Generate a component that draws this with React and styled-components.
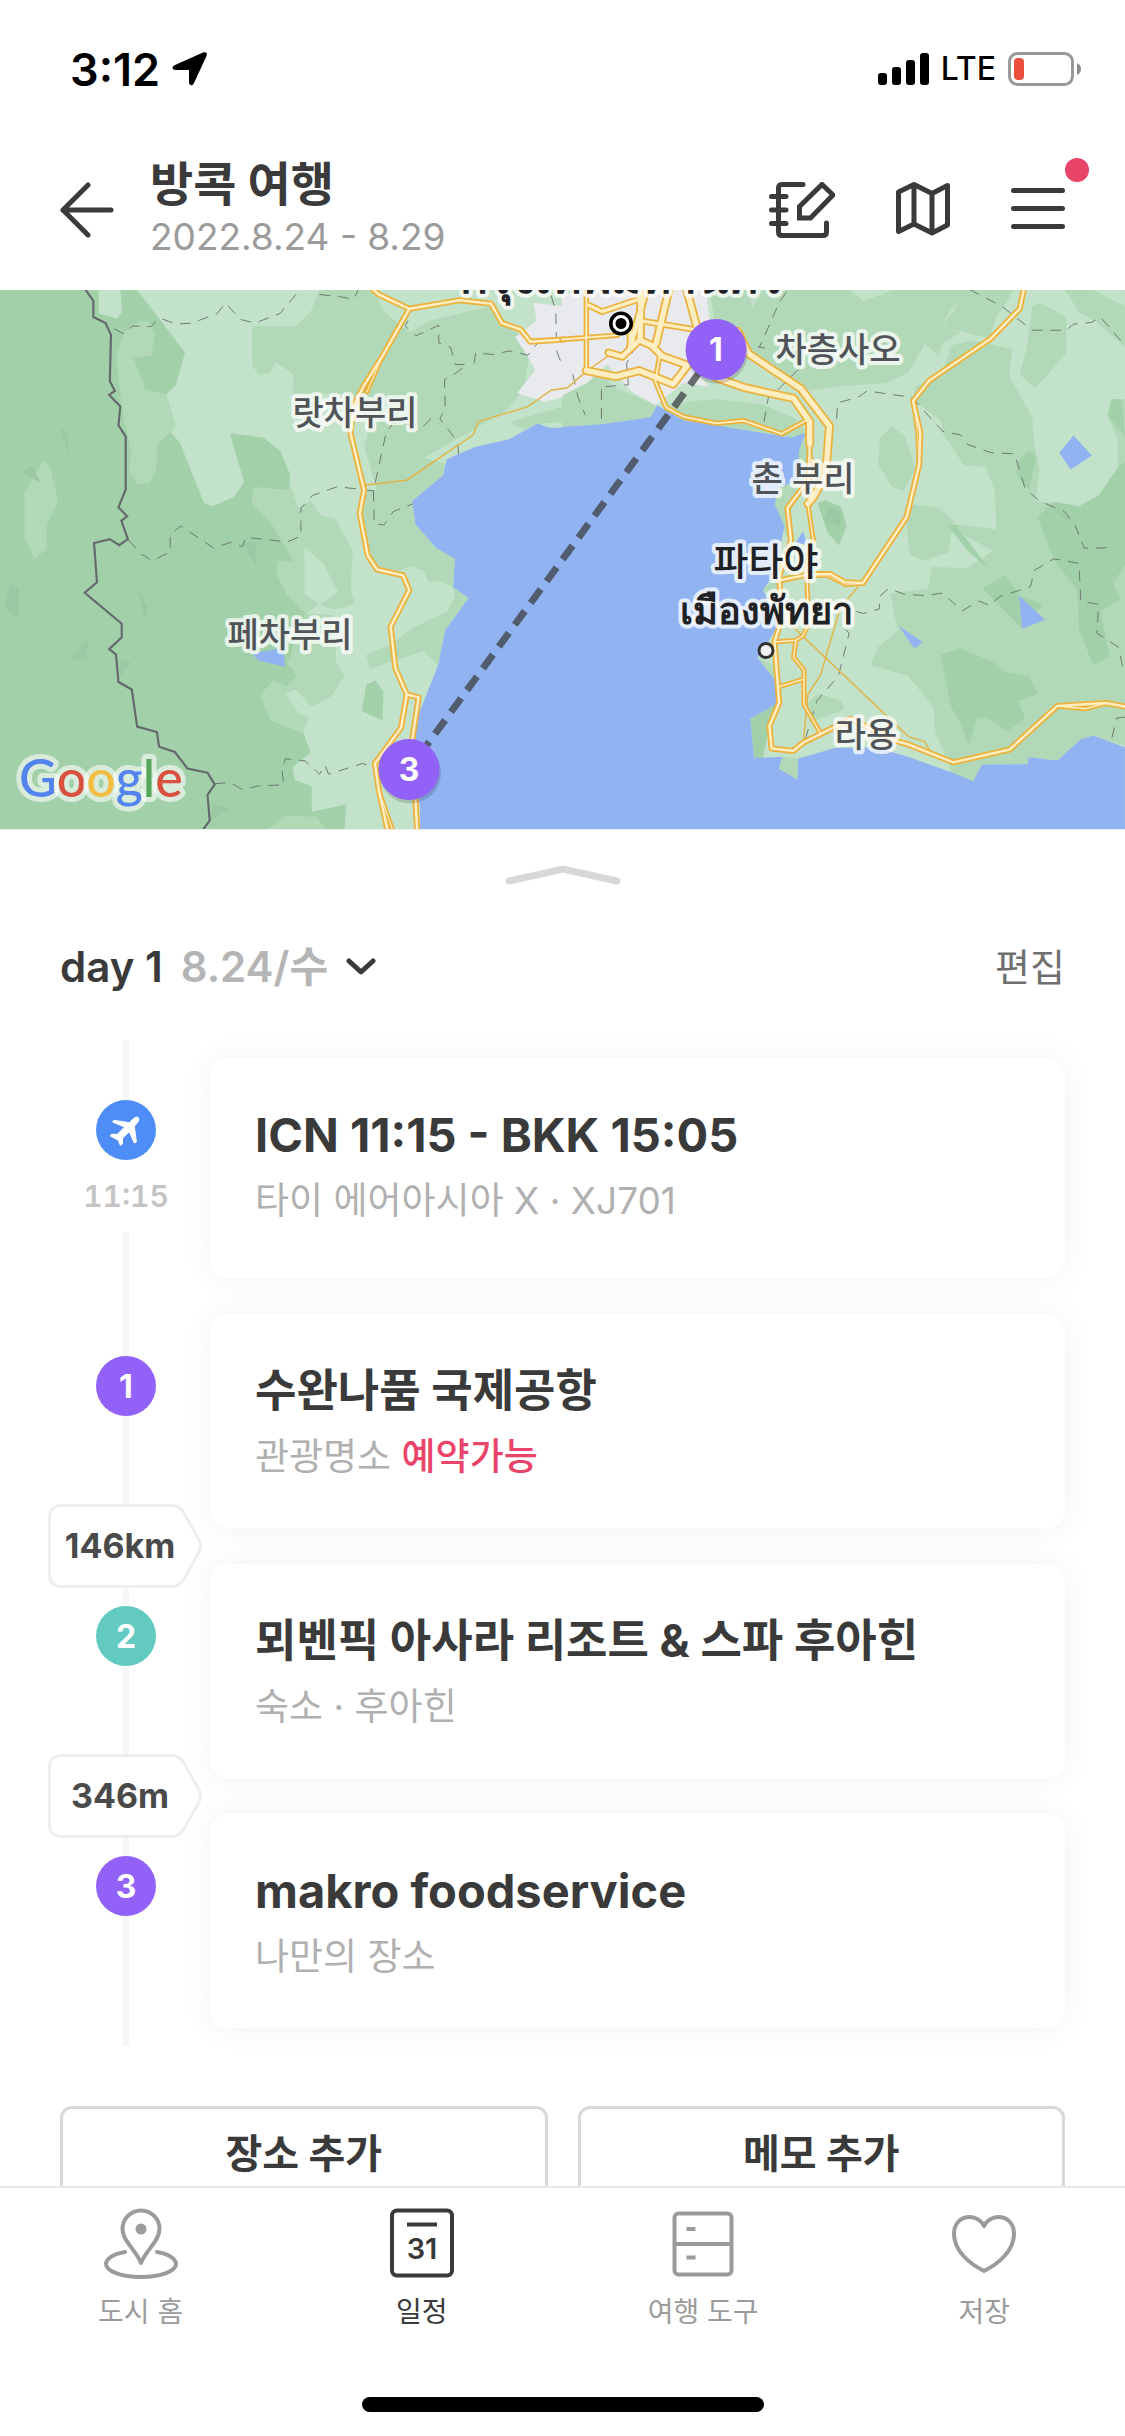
import { useState } from "react";
import styled, { createGlobalStyle } from "styled-components";

const GlobalStyle = createGlobalStyle`
  * {
    box-sizing: border-box;
  }

  body {
    margin: 0;
    background: #fff;
    color: #3a3a3a;
    font-family: Inter, "Noto Sans CJK KR", sans-serif;
  }

  button {
    font-family: inherit;
    color: inherit;
    background: none;
    border: none;
    padding: 0;
    cursor: pointer;
  }

  svg {
    display: block;
    flex-shrink: 0;
  }
`;

const Screen = styled.div`
  height: 100vh;
  display: flex;
  flex-direction: column;
  overflow: hidden;
`;

const StatusBar = styled.div`
  display: flex;
  justify-content: space-between;
  align-items: center;
  height: 136px;
  padding: 2px 44px 0 70px;
  color: #000;
  flex-shrink: 0;
`;

const StatusGroup = styled.div`
  display: flex;
  align-items: center;
  gap: 12px;
`;

const Clock = styled.span`
  font-size: 45px;
  font-weight: 600;
`;

const Network = styled.span`
  font-size: 32px;
  font-weight: 500;
  line-height: 40px;
`;

const Header = styled.header`
  display: flex;
  align-items: center;
  height: 154px;
  padding: 0 60px 6px;
  flex-shrink: 0;
`;

const TripInfo = styled.div`
  flex: 1;
  margin-left: 36px;
`;

const TripTitle = styled.h1`
  margin: 0;
  font-size: 47px;
  font-weight: 700;
  line-height: 54px;
`;

const TripDates = styled.p`
  margin: 0;
  color: #9b9b9b;
  font-size: 37px;
  line-height: 52px;
`;

const HeaderActions = styled.div`
  display: flex;
  gap: 61px;
`;

const IconButton = styled.button`
  position: relative;
  display: block;
`;

const Dot = styled.span`
  position: absolute;
  top: -24px;
  right: -24px;
  width: 24px;
  height: 24px;
  border-radius: 50%;
  background: #e9446a;
`;

const MapArea = styled.section`
  height: 540px;
  border-bottom: 1px solid #eee;
  flex-shrink: 0;

  svg {
    width: 100%;
    height: 100%;
  }
`;

const Schedule = styled.main`
  flex: 1;
  min-height: 0;
  overflow: hidden;
`;

const Handle = styled.button`
  display: flex;
  justify-content: center;
  width: 100%;
  padding: 35px 0 20px;
`;

const DayRow = styled.div`
  display: flex;
  justify-content: space-between;
  align-items: center;
  height: 60px;
  margin: 32px 60px 43px;
`;

const DaySelect = styled.button`
  display: flex;
  align-items: center;
  gap: 18px;
  font-size: 42px;
  font-weight: 600;
  line-height: 60px;
`;

const DayDate = styled.span`
  color: #b5b5b5;
`;

const EditButton = styled.button`
  color: #6f6f6f;
  font-size: 38px;
  line-height: 60px;
`;

const Timeline = styled.ol`
  margin: 0;
  padding: 0 60px 0 48px;
  list-style: none;
`;

const Stop = styled.li`
  position: relative;
  display: flex;
  gap: 6px;
`;

const Rail = styled.div`
  width: 156px;
  display: flex;
  flex-direction: column;
  align-items: center;
`;

const Line = styled.span`
  width: 6px;
  background: #f7f7f7;
  ${(props) => (props.$top ? "height: 60px;" : "flex: 1;")}
`;

const Badge = styled.span`
  display: flex;
  align-items: center;
  justify-content: center;
  width: 60px;
  height: 60px;
  border-radius: 50%;
  background: ${(props) => props.$color};
  color: #fff;
  font-size: 32px;
  font-weight: 700;
`;

const Time = styled.time`
  height: 72px;
  color: #c4c4c4;
  font-size: 30px;
  font-weight: 600;
  font-variant-numeric: tabular-nums;
  line-height: 72px;
`;

const Card = styled.article`
  flex: 1;
  margin: 18px 0;
  padding: 48px 45px 46px;
  border-radius: 18px;
  background: #fff;
  box-shadow: 0 0 32px rgba(0, 0, 0, 0.06);
  ${(props) => props.$tall && "padding-bottom: 52px;"}
`;

const CardTitle = styled.h2`
  margin: 0;
  font-size: ${(props) => (props.$latin ? 47 : 45)}px;
  font-weight: 700;
  line-height: 58px;
`;

const CardText = styled.p`
  margin: 0;
  padding-top: 12px;
  color: #b0b0b0;
  font-size: 37px;
  line-height: 50px;
`;

const Bookable = styled.strong`
  color: #e9446a;
  font-weight: 500;
`;

/* sits on the border between two stops */
const Distance = styled.div`
  position: absolute;
  left: 0;
  bottom: -42px;
  z-index: 1;
  width: 156px;
  height: 84px;
  padding-right: 12px;
  color: #4a4a4a;
  font-size: 34px;
  font-weight: 700;
  line-height: 84px;
  text-align: center;

  svg {
    position: absolute;
    inset: 0;
    z-index: -1;
  }
`;

const AddRow = styled.div`
  display: flex;
  gap: 30px;
  padding: 60px 60px 0;
`;

const AddButton = styled.button`
  flex: 1;
  height: 90px;
  border: 3px solid #d8d8d8;
  border-radius: 12px;
  font-size: 40px;
  font-weight: 700;
`;

const TabBar = styled.nav`
  background: #fff;
  border-top: 2px solid #e8e8e8;
  flex-shrink: 0;
`;

const Tabs = styled.div`
  display: grid;
  grid-template-columns: repeat(4, 1fr);
  height: 209px;
  padding-top: 12px;
`;

const Tab = styled.button`
  display: flex;
  flex-direction: column;
  align-items: center;
  gap: 8px;
  color: ${(props) => (props.$active ? "#3a3a3a" : "#9b9b9b")};
  font-size: 28px;
  line-height: 40px;
`;

const HomeIndicator = styled.div`
  width: 402px;
  height: 15px;
  margin: 0 auto 24px;
  border-radius: 8px;
  background: #000;
`;

const stroke = {
  fill: "none",
  stroke: "currentColor",
  strokeLinecap: "round",
  strokeLinejoin: "round",
};

const LocationIcon = () => (
  <svg width="36" height="36" viewBox="0 0 36 36">
    <path
      d="M3 14 L31 1.500 Q36 0 34.500 5 L22 32 Q20.500 35 18.500 34 Q17 33.500 17 31 V19 H4 Q0.500 19 0.500 16.500 Q0.500 15 3 14Z"
      fill="#000"
    />
  </svg>
);

const SignalIcon = () => (
  <svg width="51" height="32" viewBox="0 0 51 32">
    <rect x="0" y="20" width="9" height="12" rx="3" />
    <rect x="14" y="14" width="9" height="18" rx="3" />
    <rect x="28" y="7" width="9" height="25" rx="3" />
    <rect x="42" y="0" width="9" height="32" rx="3" />
  </svg>
);

const BatteryIcon = () => (
  <svg width="73" height="35" viewBox="0 0 73 35">
    <rect x="1.500" y="1.500" width="63" height="31" rx="8" fill="none" stroke="#999" strokeWidth="3" />
    <rect x="6" y="6" width="10" height="22" rx="4" fill="#ea4e3d" />
    <path d="M69 11 Q73 13 73 17 T69 23Z" fill="#8c8c8c" />
  </svg>
);

const BackIcon = () => (
  <svg width="54" height="56" viewBox="0 0 54 56" {...stroke} strokeWidth="5">
    <path d="M28 3 L3 28 L28 53 M3 28 H51" />
  </svg>
);

const NoteIcon = () => (
  <svg width="67" height="56" viewBox="0 0 67 56" {...stroke} strokeWidth="5">
    <path d="M35 2.500 H14 Q10.500 2.500 10.500 6 V50 Q10.500 53.500 14 53.500 H55 Q58.500 53.500 58.500 50 V41" />
    <path d="M3.500 14.500 H18 M3.500 28 H18 M3.500 41.500 H18" />
    <path d="M31.500 36 V24.500 L54 2.500 L65 13 L42.500 36Z" strokeLinejoin="miter" />
  </svg>
);

const MapIcon = () => (
  <svg width="54" height="56" viewBox="0 0 54 56" {...stroke} strokeWidth="5">
    <path d="M2.500 10 L18 2.500 L36 11.500 L51.500 3.500 V43 L36 51 L18 42 L2.500 49.500Z M18 2.500 V42 M36 11.500 V51" />
  </svg>
);

const MenuIcon = () => (
  <svg width="54" height="56" viewBox="0 0 54 56" {...stroke} strokeWidth="5">
    <path d="M2.500 8.500 H51.500 M2.500 26.500 H51.500 M2.500 44.500 H51.500" />
  </svg>
);

const HandleIcon = () => (
  <svg width="116" height="20" viewBox="0 0 116 20" fill="none" stroke="#d8d8d8" strokeWidth="7" strokeLinecap="round">
    <path d="M4 16 L58 4 L112 16" />
  </svg>
);

const ChevronIcon = () => (
  <svg width="30" height="18" viewBox="0 0 30 18" {...stroke} strokeWidth="5">
    <path d="M3 3 L15 14 L27 3" />
  </svg>
);

const PlaneIcon = () => (
  <svg width="60" height="60" viewBox="48 30 180 180">
    <path
      d="M160 86 Q168 79 174 82 Q179 86 175 94 L163 109 L169 156 L163 159 L148 125 L128 144 L127 162 L121 166 L115 151 L91 138 L94 133 L112 133 L134 111 L98 96 L101 91 L148 98Z"
      fill="#fff"
      stroke="#fff"
      strokeWidth="3"
      strokeLinejoin="round"
    />
  </svg>
);

const TagShape = () => (
  <svg width="156" height="84" viewBox="0 0 156 84">
    <path
      d="M14 1.500 H124 Q131 1.500 136 9 L151 36 Q154 42 151 48 L136 75 Q131 82.500 124 82.500 H14 Q1.500 82.500 1.500 70 V14 Q1.500 1.500 14 1.500Z"
      fill="#fff"
      stroke="#eee"
      strokeWidth="3"
    />
  </svg>
);

const TabIcon = ({ name }) => (
  <svg width="84" height="84" viewBox="0 0 84 84" {...stroke} strokeWidth="4">
    {name === "city" && (
      <>
        <path d="M42 63 C37 50 23.500 41 23.500 29 A18.500 18.500 0 0 1 60.500 29 C60.500 41 47 50 42 63Z" />
        <circle cx="42" cy="29" r="5.500" fill="currentColor" stroke="none" />
        <path d="M26 52 C14 54 7 59 7 64 C7 71 22 77 42 77 S77 71 77 64 C77 59 70 54 58 52" />
      </>
    )}
    {name === "plan" && (
      <>
        <rect x="12" y="10.500" width="60" height="65" rx="5" />
        <path d="M27 24.500 H57" strokeLinecap="butt" />
        <text x="42" y="59" fontSize="29" fontWeight="600" textAnchor="middle" fill="currentColor" stroke="none">
          31
        </text>
      </>
    )}
    {name === "tools" && (
      <>
        <rect x="13.500" y="13.500" width="57" height="61" rx="4" />
        <path d="M13.500 44 H70.500 M25.500 29 H34.500 M25.500 57.500 H34.500" strokeLinecap="butt" />
      </>
    )}
    {name === "saved" && (
      <path d="M42 26 C39 20 33 17 28 17 C18 17 12 24 12 34 C12 51 28 64 42 71 C56 64 72 51 72 34 C72 24 66 17 56 17 C51 17 45 20 42 26Z" />
    )}
  </svg>
);

// Map tiles: west and east halves, each in its own tile units
const west = {
  dark: [
    "0,28 380,28 440,105 515,205 490,295 462,322 490,412 475,428 500,455 568,625 592,635 652,608 680,568 640,430 735,443 780,480 808,545 805,590 708,582 702,628 755,680 820,790 770,790 775,830 800,885 850,935 820,1040 800,1075 830,1108 800,1140 760,1125 725,1165 755,1235 845,1270 865,1325 815,1365 820,1400 868,1420 868,1490 963,1470 960,1540 0,1540",
    "1075,400 1150,410 1212,430 1195,455 1150,450 1115,545 1080,545 1066,495",
    "1020,1135 1045,1122 1068,1155 1065,1235 1008,1208",
  ],
  mid: [
    "702,130 825,130 865,90 890,28 1040,28 1070,90 1140,148 1200,115 1300,90 1370,75 1440,150 1475,200 1460,310 1405,370 1180,500 1240,515 1234,548 1148,620 1157,685 1215,752 1267,782 1262,862 1220,842 1195,850 1180,815 1145,803 1110,815 1050,805 1025,770 1000,650 1015,590 1050,590 1015,470 1030,400 970,320 815,318 817,265 768,230 750,262 722,268 702,240",
    "380,120 410,115 432,150 422,212 372,220 405,308 462,322 490,412 440,460 435,530 415,570 385,573 360,540 365,480 345,390 330,280 325,210 345,150",
    "120,507 140,525 162,625 130,685 130,755 95,783 68,720 68,598",
    "708,582 805,590 810,575 830,640 865,620 893,660 935,670 982,760 977,865 988,908 930,925 890,910 850,935 800,885 775,830 770,790 820,790 755,680 702,628",
    "850,935 930,940 905,965 935,1000 935,1070 960,1108 920,1170 870,1195 845,1270 755,1235 725,1165 760,1125 800,1140 830,1108 800,1075",
    "1262,862 1305,892 1240,982 1220,1080 1180,1040 1030,1090 1020,1050 1085,1025 1150,975 1245,930 1267,888",
    "745,1540 800,1500 880,1505 910,1540",
    "1460,420 1497,403 1568,400 1568,355 1420,400",
  ],
  light: [
    "275,28 335,28 340,90 325,110 275,95",
    "848,750 900,795 942,875 890,910 848,880",
    "795,1158 825,1148 865,1195 900,1195 870,1235 830,1212",
  ],
  shade: [
    "165,418 190,425 190,488",
    "60,540 90,522 115,570",
    "385,865 412,920 402,955",
    "28,853 53,860 53,950 12,920",
    "248,1000 240,1065 198,1063",
    "675,735 712,738 715,805",
    "332,1065 365,1072 335,1115",
    "595,1470 642,1482 580,1520",
  ],
  urban: ["1485,65 1568,75 1568,330 1515,342 1440,318 1490,255 1470,215 1435,162 1495,115"],
  sea: [
    "1570,415 1530,415 1497,403 1418,447 1325,468 1244,503 1234,548 1148,620 1157,685 1215,752 1267,782 1262,862 1305,892 1240,982 1220,1080 1165,1220 1150,1290 1170,1480 1170,1540 1570,1540",
    "702,1047 790,1032 794,1084 720,1067",
  ],
};

const east = {
  mid: [
    "410,28 800,28 840,60 925,28 1130,28 1080,90 1055,130 1110,148 1060,180 1050,215 1010,180 965,260 905,290 760,300 690,310 530,210 440,170 425,110",
    "0,330 100,240 140,300 265,352 247,386 110,405 0,413",
    "295,360 360,340 430,335 560,350 650,390 690,440 640,443 500,420 430,408 340,395",
    "1085,185 1145,170 1255,195 1245,270 1310,385 1315,460 1265,495 1180,525 1120,520 1060,430 1055,395 975,335 985,300 1060,260",
    "1120,28 1260,28 1210,105 1190,165 1130,150 1055,130 1090,90",
    "1310,75 1330,65 1405,105 1405,205 1318,305 1275,265 1295,190",
    "920,410 955,440 985,530 950,592 920,580 882,520 885,445",
    "980,630 1050,640 1090,675 1075,765 1005,787 968,770 958,665",
    "1180,525 1265,495 1315,460 1330,530 1320,620 1440,635 1495,605 1548,528 1548,450 1520,380 1530,335 1568,335 1568,1305 1480,1277 1445,1287 1380,1347 1300,1338 1298,1357 1170,1358 1145,1405 1085,1380 1040,1265 1035,1200 965,1110 860,1080 880,1030 935,985 915,880 1020,865 1030,805 1130,808 1200,760 1075,690 1110,685 1210,700 1205,590",
    "1400,28 1568,28 1568,190 1490,120 1440,90",
    "680,1190 715,1160 780,1180 785,1205 690,1240",
    "600,585 660,560 640,640 625,720 593,630",
    "560,870 600,830 610,870 600,890",
    "545,1060 590,1080 600,1130",
    "604,1370 614,1336 658,1342 656,1400",
    "660,480 678,430 690,440 690,510 660,510",
  ],
  light: ["1480,28 1568,28 1568,75", "520,28 560,28 530,80"],
  dark: [
    "712,625 735,618 778,638 793,690 772,745 740,710",
    "1055,1050 1110,1033 1200,1070 1235,1100 1300,1110 1327,1160 1270,1180 1290,1230 1240,1265 1180,1225 1155,1230 1132,1308 1110,1240 1085,1200 1070,1130",
    "1300,480 1322,495 1300,590 1265,545 1270,510",
    "1440,635 1495,605 1548,528 1568,510 1568,800 1535,850 1555,895 1500,930 1525,1055 1480,1080 1440,980 1435,870 1370,785 1325,665 1370,622",
    "1235,827 1280,890 1340,910 1280,975 1225,920 1172,865",
    "525,1230 603,1185 580,1240 560,1340 535,1340",
    "1075,690 1095,685 1190,810 1135,765",
    "1530,335 1560,335 1568,440 1520,380",
  ],
  shade: ["745,635 775,650 775,692 728,672", "1370,640 1415,670 1410,680"],
  urban: ["0,45 60,28 400,28 410,100 425,170 370,250 410,300 340,290 260,352 195,315 125,238 70,290 0,325"],
  sea: [
    "-2,413 110,405 247,386 265,352 340,395 430,408 500,420 640,443 678,430 660,480 660,560 600,585 593,630 620,690 610,740 600,810 560,870 610,960 590,990 545,1060 600,1130 603,1185 525,1230 535,1340 614,1336 604,1370 656,1400 658,1342 760,1312 870,1310 960,1335 1085,1380 1145,1405 1170,1358 1298,1357 1300,1338 1380,1347 1445,1287 1480,1277 1568,1310 1568,1540 -2,1540",
    "1425,437 1476,493 1417,532 1385,485",
    "1273,885 1345,953 1282,978",
    "938,970 1005,1015 982,1034",
    "672,705 682,742 650,738",
  ],
};

const westRoads = [
  { w: 12, d: "M1030 20 L1055 42 L1140 82 L1280 58 L1368 68 L1398 122 L1450 140 L1477 174 L1570 168" },
  { w: 12, d: "M1140 82 L1065 215 L1012 300 L985 355 L976 430 L1014 590 L1002 655 L1024 772 L1050 812 L1122 828 L1140 870 L1088 972 L1101 1088 L1133 1162 L1117 1255 L1044 1355 L1055 1430 L1080 1545" },
  { w: 12, d: "M1133 1162 L1166 1170 L1148 1290 L1162 1545" },
  { w: 8, d: "M1055 1430 L1095 1545 M1065 215 L1022 315" },
];

const eastRoads = [
  { w: 10, d: "M68 20 V255 M0 168 L155 156" },
  { w: 14, d: "M75 72 L112 90 L215 55 M190 130 L190 190 M215 115 L370 140" },
  { w: 20, d: "M220 20 L218 170 L250 185 L280 215 L350 240 L310 293 L215 255 L150 272 L68 255 M300 20 L262 180 M345 20 L375 130" },
  { w: 18, d: "M235 28 L190 190 M130 205 L168 216 L218 168" },
  { w: 10, d: "M272 215 L260 285 L290 358 L340 385 L430 403 L505 395 L612 432 L680 395" },
  { w: 20, d: "M430 275 L510 303 L645 333 L690 398 V460 M490 145 L520 208 L665 305 L745 410 L735 545 L700 610 L685 628" },
  { w: 12, d: "M690 460 L688 560 L628 640 L638 730 L605 830 L612 950 L592 1015 L605 1185 L578 1250 L584 1313 L644 1320 L672 1297 L805 1230 L930 1292 L965 1302 L1090 1352 L1247 1316 L1380 1194 L1515 1186 L1570 1196" },
  { w: 9, d: "M690 500 L735 545 M685 628 L700 730 L680 800 L688 960 L672 997 L652 1010 L645 1058 L674 1093 V1190 L720 1270 M592 1015 L652 1010 M605 1140 L670 1120 M1380 1194 L1458 1202 L1515 1186" },
  { w: 12, d: "M1288 20 L1275 82 L1195 165 L1023 283 L978 340 L998 430 L995 518 L960 665 L838 850 L788 848 L748 825 L690 825 L608 842" },
  { w: 7, d: "M978 340 L990 430 L995 518 M690 830 L740 830 L790 855 L838 852" },
];

const borders = [
  "M318 138 L345 152 L370 130 L420 132 L445 108 L490 125 L535 122 L605 95 L628 66 L670 112 L710 122 L780 95 L830 35 M890 42 L945 48 L985 55 L998 28",
  "M358 730 L395 770 L425 788 L474 762 V715 L503 690 L595 752 L642 736 L675 748 L685 722 L800 735 L838 718 V640 L870 605 L940 580 L1040 592 L1060 500 L1075 430 L1095 402 L1180 410 L1205 385",
  "M1040 592 L1042 685 L1070 687 L1095 650 L1150 628 M1277 490 L1275 455 L1225 390 L1240 360 L1238 280 L1270 262 L1300 238 H1268 L1255 190 L1222 178 V128 L1158 158 L1128 130 L1145 100",
  "M1320 235 L1325 205 L1370 210 L1420 200 L1470 212 L1500 175 L1568 168 M1535 45 L1548 90 L1550 200 L1568 245",
  "M598 1412 L640 1408 L675 1428 L720 1418 L790 1415 L785 1370 L795 1342 L850 1348 L890 1385 L905 1360 L915 1385 L1010 1355 L1040 1365",
];

const eastBorders = [
  "M625 35 L605 65 L550 190 M545 188 L565 192 M650 200 L660 250 L605 305 L575 330 L560 412",
  "M250 190 L215 170 L180 235 L185 295 L120 300 M30 265 L45 330 L65 380 M110 308 V400",
  "M765 390 L768 345 L825 330 L850 312 L975 330 L1060 425 L1110 435 L1130 462 L1195 485 L1260 488 L1290 585 L1330 620 L1400 650 L1430 690 L1455 752 H1510 L1540 740",
  "M1135 28 L1225 75 L1310 142 H1405 L1425 125 L1475 120 L1500 105 L1568 185",
  "M820 930 L840 935 L885 922 L882 890 L910 865 L955 882 L1015 885 L1060 878 L1115 928 L1160 900 L1190 912 L1220 888 L1305 860 L1315 815 L1370 782 L1440 795 L1445 900 L1495 910 L1490 990 L1550 1030 L1565 1100",
  "M790 980 L800 990 L770 1110 L710 1180 L680 1280 L680 1310 M1570 1225 L1545 1228 L1530 1290",
];

const landColors = {
  mid: "#b2d9b7",
  dark: "#a1d0a9",
  light: "#c3e2ca",
  shade: "#9cc9a4",
  urban: "#e8eaed",
  sea: "#91b3f2",
};

const Land = ({ data, order }) =>
  order.map((kind) =>
    data[kind].map((points) => <polygon key={points} points={points} fill={landColors[kind]} />)
  );

const Roads = ({ roads }) => (
  <g fill="none" strokeLinejoin="round" strokeLinecap="round">
    {roads.map((road) => (
      <path key={road.d} d={road.d} stroke="#ecb23e" strokeWidth={road.w + 5} />
    ))}
    {roads.map((road) => (
      <path key={road.d} d={road.d} stroke="#fdeec2" strokeWidth={road.w - 5} />
    ))}
  </g>
);

const MapLabel = styled.text`
  fill: ${(props) => (props.$strong ? "#202124" : "#505458")};
  font-size: ${(props) => props.$size || 34}px;
  font-weight: ${(props) => (props.$bold ? 700 : 500)};
  text-anchor: middle;
  paint-order: stroke;
  stroke: rgba(255, 255, 255, 0.75);
  stroke-width: 8px;
  stroke-linejoin: round;
`;

const PinNumber = styled.text`
  fill: #fff;
  font-size: 32px;
  font-weight: 700;
  text-anchor: middle;
`;

const Logo = styled.text`
  font-family: Lato, sans-serif;
  font-size: 52px;
  font-weight: 500;
  paint-order: stroke;
  stroke: rgba(255, 255, 255, 0.6);
  stroke-width: 10px;
  stroke-linejoin: round;
`;

const labels = [
  { text: "랏차부리", x: 355, y: 135 },
  { text: "페차부리", x: 290, y: 357 },
  { text: "차층사오", x: 838, y: 72 },
  { text: "촌 부리", x: 803, y: 201 },
  { text: "라용", x: 866, y: 457 },
  { text: "파타야", x: 766, y: 285, size: 38, strong: true },
  { text: "เมืองพัทยา", x: 766, y: 334, size: 38, strong: true, bold: true },
  { text: "กรุงเทพมหานคร", x: 622, y: 3, size: 46, strong: true, bold: true },
];

const pins = [
  { n: 1, x: 716, y: 60 },
  { n: 3, x: 409, y: 480 },
];

const logoLetters = [
  ["G", "#5383ec"],
  ["o", "#d85040"],
  ["o", "#f1bd42"],
  ["g", "#5383ec"],
  ["l", "#58a55c"],
  ["e", "#d85040"],
];

const TripMap = () => (
  <svg viewBox="0 0 1125 540" preserveAspectRatio="xMidYMid slice" role="img" aria-label="방콕 여행 지도">
    <rect width="1125" height="540" fill="#c3e2ca" />
    <g transform="scale(0.35906 0.35714) translate(0 -28)">
      <Land data={west} order={["dark", "mid", "light", "shade", "urban", "sea"]} />
      <g transform="translate(1565 0)">
        <Land data={east} order={["mid", "light", "dark", "shade", "urban", "sea"]} />
      </g>
      <path
        d="M232 20 L260 60 V105 L294 122 L309 155 L306 285 L320 312 L304 323 L335 355 L330 408 L350 440 V588 L330 638 L354 663 L338 675 L356 727 L332 744 L306 727 L262 738 L270 848 L236 877 L339 964 V1002 L304 1035 L323 1050 L330 1127 L367 1148 L382 1252 L437 1267 L443 1308 L487 1323 L522 1369 L578 1381 L598 1414 L578 1443 L584 1515 L562 1545"
        fill="none"
        stroke="#64696c"
        strokeWidth="6"
      />
      <g fill="none" stroke="#64706a" strokeWidth="2.500" strokeDasharray="30 22">
        {borders.map((d) => (
          <path key={d} d={d} />
        ))}
        <g transform="translate(1565 0)">
          {eastBorders.map((d) => (
            <path key={d} d={d} />
          ))}
        </g>
      </g>
      <g fill="none" stroke="#e0b548" strokeWidth="4">
        <path d="M1014 576 L1133 562 L1318 435 L1332 398 L1470 356 L1535 310 L1580 303 L1632 258 L1700 210" />
        <path d="M2195 960 L2530 1280 L2575 1294 L2590 1320 M2390 860 L2340 920 L2285 1108 L2250 1162 L2238 1290" />
      </g>
      <Roads roads={westRoads} />
      <g transform="translate(1565 0)">
        <Roads roads={eastRoads} />
      </g>
    </g>

    <path d="M716 60 L409 480" stroke="#3c4043" strokeOpacity="0.75" strokeWidth="7" strokeDasharray="17 10" />

    <circle cx="621" cy="34" r="12" />
    <circle cx="621" cy="34" r="7" stroke="#fff" strokeWidth="3" />
    <circle cx="766" cy="361" r="7" fill="#f1f1f1" stroke="#333" strokeWidth="3" />

    {labels.map((label) => (
      <MapLabel
        key={label.text}
        x={label.x}
        y={label.y}
        $size={label.size}
        $strong={label.strong}
        $bold={label.bold}
      >
        {label.text}
      </MapLabel>
    ))}

    {pins.map((pin) => (
      <g key={pin.n}>
        <circle cx={pin.x + 1} cy={pin.y + 3} r="31" fill="#000" fillOpacity="0.15" />
        <circle cx={pin.x} cy={pin.y} r="30.500" fill="#9161f8" />
        <PinNumber x={pin.x} y={pin.y + 11}>
          {pin.n}
        </PinNumber>
      </g>
    ))}

    <Logo x="19" y="507">
      {logoLetters.map(([letter, color], i) => (
        <tspan key={i} fill={color}>
          {letter}
        </tspan>
      ))}
    </Logo>
  </svg>
);

const stops = [
  { title: "ICN 11:15 - BKK 15:05", latin: true, text: "타이 에어아시아 X · XJ701", time: "11:15", color: "#4e8df6" },
  { n: 1, title: "수완나품 국제공항", text: "관광명소", bookable: "예약가능", color: "#9161f8", distance: "146km" },
  { n: 2, title: "뫼벤픽 아사라 리조트 & 스파 후아힌", text: "숙소 · 후아힌", color: "#63cac1", distance: "346m" },
  { n: 3, title: "makro foodservice", latin: true, text: "나만의 장소", color: "#9161f8" },
];

const tabs = [
  { id: "city", label: "도시 홈" },
  { id: "plan", label: "일정" },
  { id: "tools", label: "여행 도구" },
  { id: "saved", label: "저장" },
];

const App = () => {
  const [activeTab, setActiveTab] = useState("plan");

  return (
    <>
      <GlobalStyle />
      <Screen>
        <StatusBar>
          <StatusGroup>
            <Clock>3:12</Clock>
            <LocationIcon />
          </StatusGroup>
          <StatusGroup>
            <SignalIcon />
            <Network>LTE</Network>
            <BatteryIcon />
          </StatusGroup>
        </StatusBar>

        <Header>
          <IconButton aria-label="뒤로">
            <BackIcon />
          </IconButton>
          <TripInfo>
            <TripTitle>방콕 여행</TripTitle>
            <TripDates>2022.8.24 - 8.29</TripDates>
          </TripInfo>
          <HeaderActions>
            <IconButton aria-label="메모">
              <NoteIcon />
            </IconButton>
            <IconButton aria-label="지도">
              <MapIcon />
            </IconButton>
            <IconButton aria-label="메뉴">
              <MenuIcon />
              <Dot />
            </IconButton>
          </HeaderActions>
        </Header>

        <MapArea>
          <TripMap />
        </MapArea>

        <Schedule>
          <Handle aria-label="펼치기">
            <HandleIcon />
          </Handle>
          <DayRow>
            <DaySelect>
              <span>day 1</span>
              <DayDate>8.24/수</DayDate>
              <ChevronIcon />
            </DaySelect>
            <EditButton>편집</EditButton>
          </DayRow>

          <Timeline>
            {stops.map((stop) => (
              <Stop key={stop.title}>
                <Rail>
                  <Line $top />
                  <Badge $color={stop.color}>{stop.n || <PlaneIcon />}</Badge>
                  {stop.time && <Time>{stop.time}</Time>}
                  <Line />
                </Rail>
                <Card $tall={!stop.n}>
                  <CardTitle $latin={stop.latin}>{stop.title}</CardTitle>
                  <CardText>
                    {stop.text} {stop.bookable && <Bookable>{stop.bookable}</Bookable>}
                  </CardText>
                </Card>
                {stop.distance && (
                  <Distance>
                    <TagShape />
                    {stop.distance}
                  </Distance>
                )}
              </Stop>
            ))}
          </Timeline>

          <AddRow>
            <AddButton>장소 추가</AddButton>
            <AddButton>메모 추가</AddButton>
          </AddRow>
        </Schedule>

        <TabBar>
          <Tabs>
            {tabs.map((tab) => (
              <Tab key={tab.id} $active={tab.id === activeTab} onClick={() => setActiveTab(tab.id)}>
                <TabIcon name={tab.id} />
                {tab.label}
              </Tab>
            ))}
          </Tabs>
          <HomeIndicator />
        </TabBar>
      </Screen>
    </>
  );
};

export default App;
